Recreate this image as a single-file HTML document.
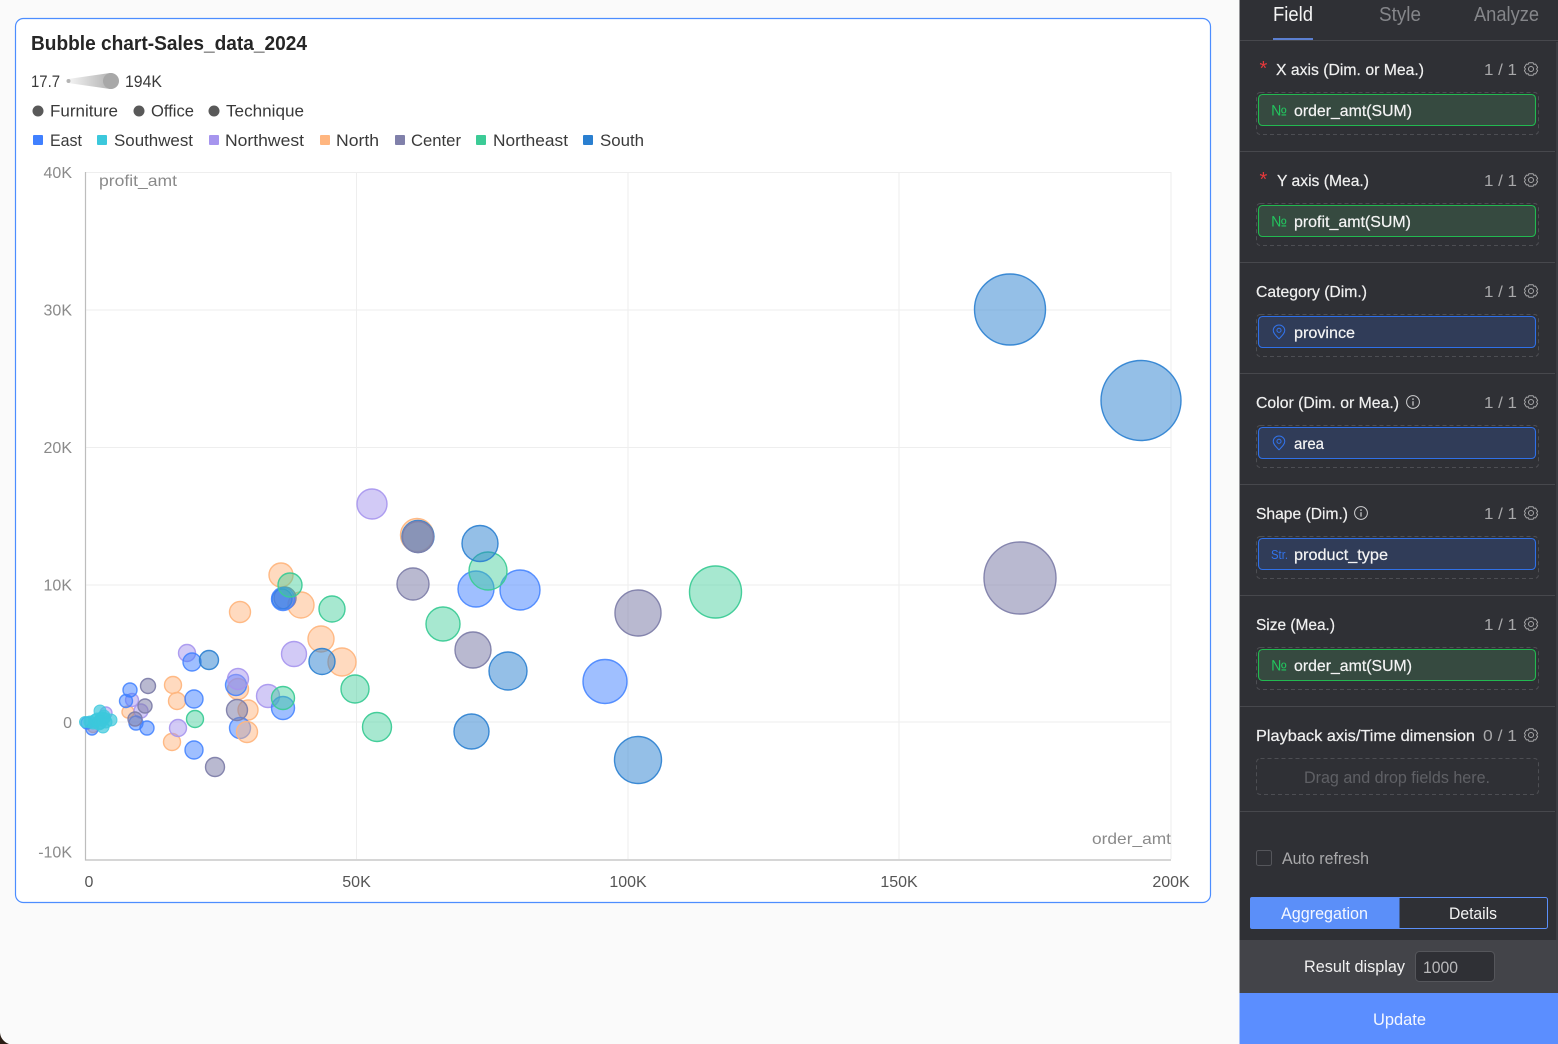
<!DOCTYPE html>
<html lang="en">
<head>
<meta charset="utf-8">
<title>Bubble chart-Sales_data_2024</title>
<style>
html,body{margin:0;padding:0;width:1558px;height:1044px;overflow:hidden;background:#fafafa}
svg{display:block;font-family:"Liberation Sans",sans-serif}
.lg{font-size:17px;fill:#3a3a3a}
.ax{font-size:16px;fill:#8a8a8a}
.lb{font-size:16px;fill:#f0f0f0;stroke:#f0f0f0;stroke-width:.2}
.ct{font-size:16px;fill:#a8a8aa}
.pt{font-size:16px;fill:#f4f4f4;stroke:#f4f4f4;stroke-width:.2}
.e circle{fill:#4080ff;fill-opacity:.5;stroke:#4080ff;stroke-width:1.4;stroke-opacity:.85}
.s circle{fill:#2a7fd0;fill-opacity:.5;stroke:#2a7fd0;stroke-width:1.4;stroke-opacity:.9}
.w circle{fill:#a695ee;fill-opacity:.5;stroke:#a695ee;stroke-width:1.4;stroke-opacity:.9}
.n circle{fill:#ffb680;fill-opacity:.5;stroke:#ffb680;stroke-width:1.4;stroke-opacity:.95}
.c circle{fill:#8080aa;fill-opacity:.55;stroke:#8080aa;stroke-width:1.4;stroke-opacity:.95}
.g circle{fill:#3ccb96;fill-opacity:.45;stroke:#3ccb96;stroke-width:1.4;stroke-opacity:.95}
.y circle{fill:#3cc8dc;fill-opacity:.7;stroke:#3cc8dc;stroke-width:1;stroke-opacity:.8}
</style>
</head>
<body>
<svg width="1558" height="1044" viewBox="0 0 1558 1044" xmlns="http://www.w3.org/2000/svg">
<defs>
<linearGradient id="cone" x1="0" x2="1" y1="0" y2="0"><stop offset="0" stop-color="#f4f4f4"/><stop offset="1" stop-color="#a8a8a8"/></linearGradient>
<symbol id="gear" viewBox="0 0 14 14" overflow="visible"><path d="M4.9 .8 L9.1 .8 L9.7 2.2 L11.6 2.1 L13.6 5.4 L12.6 7 L13.6 8.6 L11.6 11.9 L9.7 11.800 L9.1 13.200 L4.9 13.200 L4.3 11.800 L2.4 11.900 L.4 8.600 L1.400 7 L.4 5.400 L2.400 2.100 L4.300 2.200 Z" fill="none" stroke="#a6a6a8" stroke-width="1" stroke-linejoin="round"/><circle cx="7" cy="7" r="2.5" fill="none" stroke="#a6a6a8" stroke-width="1"/></symbol>
<symbol id="pin" viewBox="0 0 14 16" overflow="visible"><path d="M7 15.3 C4.2 12.4 .8 9.6 .8 6.2 A6.2 5.7 0 0 1 13.2 6.2 C13.2 9.6 9.8 12.4 7 15.3 Z" fill="none" stroke="#3273ea" stroke-width="1.1" stroke-linejoin="round"/><circle cx="7" cy="6.2" r="2.2" fill="none" stroke="#3273ea" stroke-width="1.1"/></symbol>
<symbol id="info" viewBox="0 0 14 14" overflow="visible"><circle cx="7" cy="7" r="6.400" fill="none" stroke="#d0d0d2" stroke-width="1"/><path d="M7 6.200V10.600" fill="none" stroke="#d0d0d2" stroke-width="1.200"/><circle cx="7" cy="4.100" r=".8" fill="#d0d0d2"/></symbol>
</defs>

<rect width="1558" height="1044" fill="#fafafa"/>
<path d="M0 1031 A13 13 0 0 0 9 1044 L0 1044 Z" fill="#2a1d15"/>

<!-- chart card -->
<rect x="15.500" y="18.500" width="1195" height="884" rx="8" fill="#fff" stroke="#4c8dff" stroke-width="1.200"/>
<text x="31" y="50" font-size="20" font-weight="700" fill="#262626" textLength="276" lengthAdjust="spacingAndGlyphs">Bubble chart-Sales_data_2024</text>

<!-- size legend -->
<text x="31" y="87" class="lg" textLength="29" lengthAdjust="spacingAndGlyphs">17.7</text>
<path d="M68 79 L110 73 A8 8 0 0 1 110 89 L68 83 Z" fill="url(#cone)"/>
<circle cx="68.500" cy="81" r="2" fill="#b4b4b4"/>
<circle cx="111" cy="81" r="8" fill="#a8a8a8"/>
<text x="125" y="87" class="lg" textLength="37" lengthAdjust="spacingAndGlyphs">194K</text>

<!-- shape legend -->
<circle cx="38" cy="111" r="5.500" fill="#595959"/><text x="50" y="116.500" class="lg" textLength="68" lengthAdjust="spacingAndGlyphs">Furniture</text>
<circle cx="139" cy="111" r="5.500" fill="#595959"/><text x="151" y="116.500" class="lg" textLength="43" lengthAdjust="spacingAndGlyphs">Office</text>
<circle cx="214" cy="111" r="5.500" fill="#595959"/><text x="226" y="116.500" class="lg" textLength="78" lengthAdjust="spacingAndGlyphs">Technique</text>

<!-- color legend -->
<rect x="33" y="135" width="10" height="10" rx="1" fill="#4080ff"/><text x="50" y="146" class="lg" textLength="32" lengthAdjust="spacingAndGlyphs">East</text>
<rect x="97" y="135" width="10" height="10" rx="1" fill="#3cc8dc"/><text x="114" y="146" class="lg" textLength="79" lengthAdjust="spacingAndGlyphs">Southwest</text>
<rect x="209" y="135" width="10" height="10" rx="1" fill="#a695ee"/><text x="225" y="146" class="lg" textLength="79" lengthAdjust="spacingAndGlyphs">Northwest</text>
<rect x="320" y="135" width="10" height="10" rx="1" fill="#ffb680"/><text x="336" y="146" class="lg" textLength="43" lengthAdjust="spacingAndGlyphs">North</text>
<rect x="395" y="135" width="10" height="10" rx="1" fill="#8080aa"/><text x="411" y="146" class="lg" textLength="50" lengthAdjust="spacingAndGlyphs">Center</text>
<rect x="476" y="135" width="10" height="10" rx="1" fill="#3ccb96"/><text x="493" y="146" class="lg" textLength="75" lengthAdjust="spacingAndGlyphs">Northeast</text>
<rect x="583" y="135" width="10" height="10" rx="1" fill="#2a7fd0"/><text x="600" y="146" class="lg" textLength="44" lengthAdjust="spacingAndGlyphs">South</text>

<!-- grid -->
<g stroke="#eeeeee" stroke-width="1" fill="none">
<path d="M85 172.500H1171M85 310H1171M85 447.500H1171M85 585H1171M85 722H1171"/>
<path d="M356.500 172V859M628 172V859M899 172V859M1171 172V859"/>
</g>
<path d="M85.500 172V860H1171" fill="none" stroke="#bdbdbd" stroke-width="1.200"/>

<!-- axis labels -->
<g class="ax">
<text x="72" y="178" text-anchor="end">40K</text>
<text x="72" y="315.500" text-anchor="end">30K</text>
<text x="72" y="453" text-anchor="end">20K</text>
<text x="72" y="590.500" text-anchor="end">10K</text>
<text x="72" y="728" text-anchor="end">0</text>
<text x="72" y="857.500" text-anchor="end">-10K</text>
<text x="99" y="186" textLength="78" lengthAdjust="spacingAndGlyphs">profit_amt</text>
<text x="1092" y="844" textLength="79" lengthAdjust="spacingAndGlyphs">order_amt</text>
</g>
<g class="ax" style="fill:#555">
<text x="89" y="887" text-anchor="middle">0</text>
<text x="356.500" y="887" text-anchor="middle">50K</text>
<text x="628" y="887" text-anchor="middle">100K</text>
<text x="899" y="887" text-anchor="middle">150K</text>
<text x="1171" y="887" text-anchor="middle">200K</text>
</g>

<!-- bubbles -->
<g class="n">
<circle cx="281" cy="575" r="12"/><circle cx="301" cy="605" r="13"/><circle cx="240" cy="612" r="10.500"/><circle cx="321" cy="639" r="13"/><circle cx="342" cy="662" r="14"/><circle cx="417" cy="535" r="16.500"/>
<circle cx="173" cy="685" r="8.500"/><circle cx="177" cy="701" r="8.500"/><circle cx="128" cy="712" r="6"/><circle cx="172" cy="742" r="8.500"/><circle cx="248" cy="710" r="10"/><circle cx="238" cy="689" r="10.500"/><circle cx="93" cy="727" r="5.500"/>
</g>
<g class="w">
<circle cx="372" cy="504" r="15"/><circle cx="294" cy="654" r="12.500"/><circle cx="268" cy="696" r="11.500"/><circle cx="187" cy="653" r="8.500"/><circle cx="132" cy="700" r="6.500"/><circle cx="141" cy="711" r="7"/><circle cx="178" cy="728" r="8.500"/><circle cx="106" cy="713" r="6"/>
</g>
<g class="c"><circle cx="285" cy="598" r="11"/></g>
<g class="s"><circle cx="282" cy="599" r="10"/><circle cx="418" cy="536.500" r="16"/></g>
<g class="e">
<circle cx="605" cy="681.500" r="22"/><circle cx="520" cy="590" r="20"/><circle cx="476" cy="589" r="18"/><circle cx="283" cy="708" r="11.500"/><circle cx="194" cy="750" r="9"/><circle cx="194" cy="699" r="9"/><circle cx="192" cy="662" r="9"/><circle cx="283" cy="599" r="11.500"/><circle cx="236" cy="685" r="10.500"/><circle cx="240" cy="728" r="10.500"/><circle cx="130" cy="690" r="7"/><circle cx="126" cy="701" r="6.500"/><circle cx="136" cy="723" r="7"/><circle cx="147" cy="728" r="7"/><circle cx="92" cy="729" r="6"/><circle cx="87" cy="723" r="6"/>
</g>
<g class="w"><circle cx="238" cy="679" r="10.500"/></g>
<g class="c">
<circle cx="1020" cy="578" r="36"/><circle cx="638" cy="613" r="23"/><circle cx="473" cy="650" r="18"/><circle cx="413" cy="584" r="16"/><circle cx="418" cy="537" r="15.500"/><circle cx="215" cy="767" r="9.500"/><circle cx="148" cy="686" r="7.500"/><circle cx="145" cy="706" r="7"/><circle cx="135" cy="719" r="7"/><circle cx="237" cy="710" r="10.500"/>
</g>
<g class="n"><circle cx="247" cy="732" r="10.500"/></g>
<g class="g">
<circle cx="715.500" cy="592" r="26"/><circle cx="488" cy="571" r="19"/><circle cx="443" cy="624" r="17"/><circle cx="377" cy="727" r="14.500"/><circle cx="355" cy="689" r="14"/><circle cx="332" cy="609" r="13"/><circle cx="290" cy="585" r="12"/><circle cx="283" cy="698" r="11.500"/><circle cx="195" cy="719" r="8.500"/>
</g>
<g class="s">
<circle cx="1010" cy="309.500" r="35.500"/><circle cx="1141" cy="400.500" r="40"/><circle cx="480" cy="543.500" r="18"/><circle cx="508" cy="671" r="19"/><circle cx="471.500" cy="731.500" r="17.500"/><circle cx="638" cy="760" r="23.500"/><circle cx="209" cy="660" r="9.500"/><circle cx="322" cy="661.500" r="13"/>
</g>
<g class="y">
<circle cx="100" cy="711" r="6"/><circle cx="111" cy="720" r="6"/><circle cx="103" cy="727" r="6"/><circle cx="85" cy="722" r="5.500"/><circle cx="90" cy="722" r="6"/><circle cx="95" cy="721" r="6.500"/><circle cx="99" cy="723" r="7"/><circle cx="102" cy="719" r="7"/><circle cx="104" cy="716" r="6"/><circle cx="100" cy="722" r="7"/><circle cx="97" cy="719" r="6"/><circle cx="93" cy="724" r="5"/><circle cx="106" cy="722" r="6"/><circle cx="105" cy="718" r="5.500"/>
</g>

<!-- sidebar -->
<rect x="1239.500" y="0" width="318.500" height="1044" fill="#2f3035"/>
<rect x="1556" y="42" width="2" height="898" fill="#3b3c42"/>
<text x="1273" y="21" font-size="20" fill="#f4f4f4" textLength="40" lengthAdjust="spacingAndGlyphs">Field</text>
<text x="1379" y="21" font-size="20" fill="#85868a" textLength="42" lengthAdjust="spacingAndGlyphs">Style</text>
<text x="1474" y="21" font-size="20" fill="#85868a" textLength="65" lengthAdjust="spacingAndGlyphs">Analyze</text>
<rect x="1273" y="38" width="40" height="2" fill="#5b7fd0"/>
<g stroke="#47484d" stroke-width="1">
<path d="M1240 40.500H1558M1240 151.500H1555M1240 262.500H1555M1240 373.500H1555M1240 484.500H1555M1240 595.500H1555M1240 706.500H1555M1240 811.500H1555"/>
</g>

<!-- dashed drop zones -->
<g fill="none" stroke="#4d4e53" stroke-width="1" stroke-dasharray="4 3">
<rect x="1256.500" y="92.500" width="282" height="42" rx="4"/>
<rect x="1256.500" y="203.500" width="282" height="42" rx="4"/>
<rect x="1256.500" y="314.500" width="282" height="42" rx="4"/>
<rect x="1256.500" y="425.500" width="282" height="42" rx="4"/>
<rect x="1256.500" y="536.500" width="282" height="42" rx="4"/>
<rect x="1256.500" y="647.500" width="282" height="42" rx="4"/>
<rect x="1256.500" y="758.500" width="282" height="36" rx="4"/>
</g>

<!-- pills -->
<g stroke-width="1.100">
<rect x="1258.500" y="94.500" width="277" height="31" rx="4" fill="#364a40" stroke="#22b950"/>
<rect x="1258.500" y="205.500" width="277" height="31" rx="4" fill="#364a40" stroke="#22b950"/>
<rect x="1258.500" y="316.500" width="277" height="31" rx="4" fill="#303c58" stroke="#2f70e8"/>
<rect x="1258.500" y="427.500" width="277" height="31" rx="4" fill="#303c58" stroke="#2f70e8"/>
<rect x="1258.500" y="538.500" width="277" height="31" rx="4" fill="#303c58" stroke="#2f70e8"/>
<rect x="1258.500" y="649.500" width="277" height="31" rx="4" fill="#364a40" stroke="#22b950"/>
</g>

<!-- asterisks -->
<text x="1259.500" y="75" font-size="20" fill="#e5383b">*</text>
<text x="1259.500" y="186" font-size="20" fill="#e5383b">*</text>

<!-- labels -->
<text x="1276" y="75" class="lb" textLength="148" lengthAdjust="spacingAndGlyphs">X axis (Dim. or Mea.)</text>
<text x="1277" y="186" class="lb" textLength="92" lengthAdjust="spacingAndGlyphs">Y axis (Mea.)</text>
<text x="1256" y="297" class="lb" textLength="111" lengthAdjust="spacingAndGlyphs">Category (Dim.)</text>
<text x="1256" y="408" class="lb" textLength="143" lengthAdjust="spacingAndGlyphs">Color (Dim. or Mea.)</text>
<text x="1256" y="519" class="lb" textLength="92" lengthAdjust="spacingAndGlyphs">Shape (Dim.)</text>
<text x="1256" y="630" class="lb" textLength="79" lengthAdjust="spacingAndGlyphs">Size (Mea.)</text>
<text x="1256" y="741" class="lb" textLength="219" lengthAdjust="spacingAndGlyphs">Playback axis/Time dimension</text>

<text x="1484" y="75" class="ct" textLength="33" lengthAdjust="spacingAndGlyphs">1 / 1</text>
<text x="1484" y="186" class="ct" textLength="33" lengthAdjust="spacingAndGlyphs">1 / 1</text>
<text x="1484" y="297" class="ct" textLength="33" lengthAdjust="spacingAndGlyphs">1 / 1</text>
<text x="1484" y="408" class="ct" textLength="33" lengthAdjust="spacingAndGlyphs">1 / 1</text>
<text x="1484" y="519" class="ct" textLength="33" lengthAdjust="spacingAndGlyphs">1 / 1</text>
<text x="1484" y="630" class="ct" textLength="33" lengthAdjust="spacingAndGlyphs">1 / 1</text>
<text x="1483" y="741" class="ct" textLength="34" lengthAdjust="spacingAndGlyphs">0 / 1</text>

<use href="#gear" x="1524" y="62" width="14" height="14"/>
<use href="#gear" x="1524" y="173" width="14" height="14"/>
<use href="#gear" x="1524" y="284" width="14" height="14"/>
<use href="#gear" x="1524" y="395" width="14" height="14"/>
<use href="#gear" x="1524" y="506" width="14" height="14"/>
<use href="#gear" x="1524" y="617" width="14" height="14"/>
<use href="#gear" x="1524" y="728" width="14" height="14"/>

<use href="#info" x="1406" y="395" width="14" height="14"/>
<use href="#info" x="1354" y="506" width="14" height="14"/>

<!-- pill content -->
<text x="1271" y="115.500" font-size="15" fill="#22c55e" textLength="16" lengthAdjust="spacingAndGlyphs">№</text>
<text x="1271" y="226.500" font-size="15" fill="#22c55e" textLength="16" lengthAdjust="spacingAndGlyphs">№</text>
<text x="1271" y="670.500" font-size="15" fill="#22c55e" textLength="16" lengthAdjust="spacingAndGlyphs">№</text>
<use href="#pin" x="1272.500" y="324" width="13" height="16"/>
<use href="#pin" x="1272.500" y="435" width="13" height="16"/>
<text x="1271" y="559" font-size="13" fill="#3273ea" textLength="17" lengthAdjust="spacingAndGlyphs">Str.</text>

<text x="1294" y="116" class="pt" textLength="118" lengthAdjust="spacingAndGlyphs">order_amt(SUM)</text>
<text x="1294" y="227" class="pt" textLength="117" lengthAdjust="spacingAndGlyphs">profit_amt(SUM)</text>
<text x="1294" y="338" class="pt" textLength="61" lengthAdjust="spacingAndGlyphs">province</text>
<text x="1294" y="449" class="pt" textLength="30" lengthAdjust="spacingAndGlyphs">area</text>
<text x="1294" y="560" class="pt" textLength="94" lengthAdjust="spacingAndGlyphs">product_type</text>
<text x="1294" y="671" class="pt" textLength="118" lengthAdjust="spacingAndGlyphs">order_amt(SUM)</text>

<text x="1304" y="783" font-size="16.500" fill="#5f6065" textLength="186" lengthAdjust="spacingAndGlyphs">Drag and drop fields here.</text>

<!-- auto refresh -->
<rect x="1256.500" y="850.500" width="15" height="15" rx="2" fill="#2f3035" stroke="#55565b"/>
<text x="1282" y="864" font-size="16.500" fill="#a8a8aa" textLength="87" lengthAdjust="spacingAndGlyphs">Auto refresh</text>

<!-- segmented -->
<path d="M1399 897.500H1545.500A2 2 0 0 1 1547.500 899.500V926.500A2 2 0 0 1 1545.500 928.500H1399Z" fill="#2f3035" stroke="#5b8ff9"/>
<path d="M1252 897H1399.500V929H1252A2 2 0 0 1 1250 927V899A2 2 0 0 1 1252 897Z" fill="#5b8ff9"/>
<text x="1281" y="919" font-size="17" fill="#f4f7ff" textLength="87" lengthAdjust="spacingAndGlyphs">Aggregation</text>
<text x="1449" y="919" font-size="17" fill="#f4f4f4" textLength="48" lengthAdjust="spacingAndGlyphs">Details</text>

<!-- result -->
<rect x="1239.500" y="940" width="318.500" height="53" fill="#434449"/>
<text x="1304" y="972" font-size="17" fill="#f0f0f0" textLength="101" lengthAdjust="spacingAndGlyphs">Result display</text>
<rect x="1415.500" y="951.500" width="79" height="30" rx="4" fill="#2f3035" stroke="#55565b"/>
<text x="1423" y="973" font-size="17" fill="#b8b8ba" textLength="35" lengthAdjust="spacingAndGlyphs">1000</text>

<!-- update -->
<rect x="1239.500" y="993" width="318.500" height="51" fill="#5b8eff"/>
<text x="1373" y="1025" font-size="17" fill="#f4f7ff" textLength="53" lengthAdjust="spacingAndGlyphs">Update</text>
</svg>
</body>
</html>
